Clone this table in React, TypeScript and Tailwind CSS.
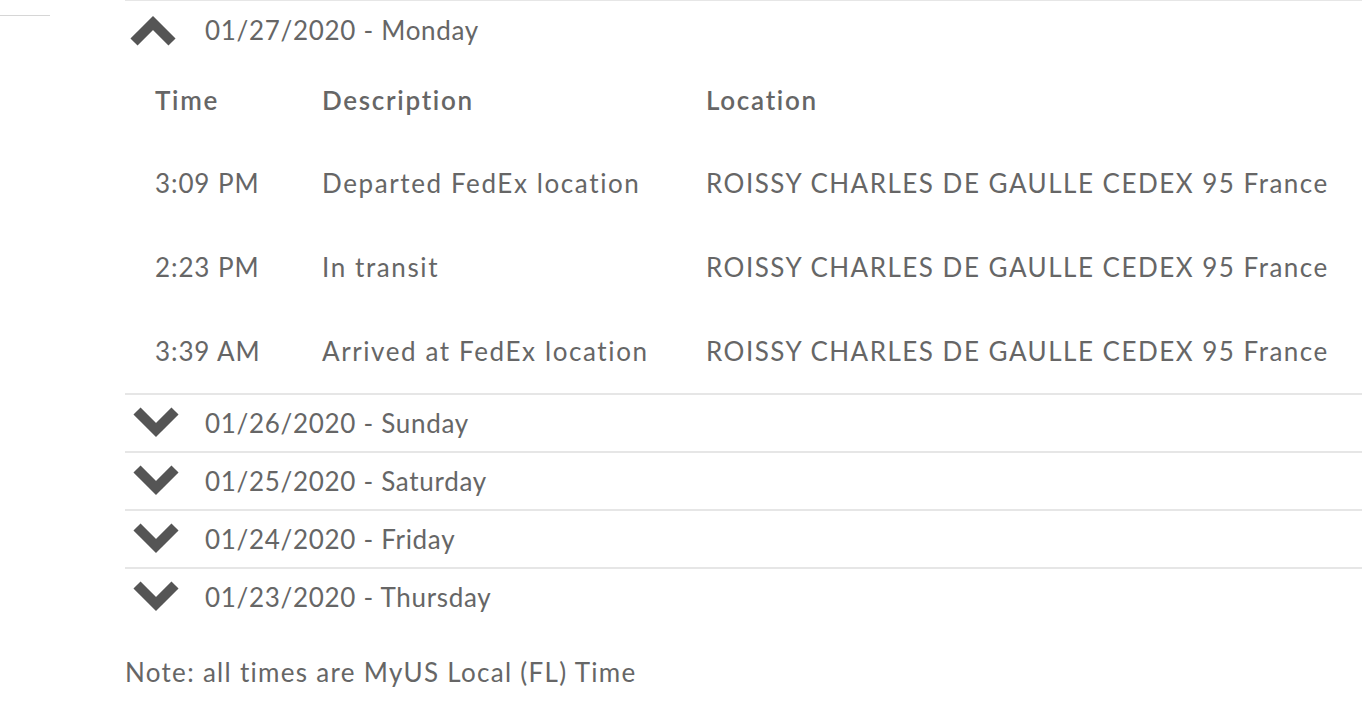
import React from "react";

const font = { fontFamily: "Lato, 'Noto Sans', sans-serif" };

function Chevron({ up }: { up?: boolean }) {
  return (
    <svg width="50" height="34" viewBox="0 0 50 34" className="shrink-0">
      <polyline
        points={up ? "6,29 25,10 44,29" : "6,5 25,24 44,5"}
        fill="none"
        stroke="#555555"
        strokeWidth="10"
        strokeLinejoin="miter"
      />
    </svg>
  );
}

const rows = [
  ["3:09 PM", "Departed FedEx location", "ROISSY CHARLES DE GAULLE CEDEX 95 France"],
  ["2:23 PM", "In transit", "ROISSY CHARLES DE GAULLE CEDEX 95 France"],
  ["3:39 AM", "Arrived at FedEx location", "ROISSY CHARLES DE GAULLE CEDEX 95 France"],
];

const days = ["01/26/2020 - Sunday", "01/25/2020 - Saturday", "01/24/2020 - Friday", "01/23/2020 - Thursday"];

export default function App() {
  return (
    <div className="w-[1362px] h-[710px] bg-white flex overflow-hidden text-[#666666]" style={font}>
      <div className="w-[125px] shrink-0">
        <div className="w-[50px] h-px bg-[#d6d6d6] mt-[15px]" />
      </div>
      <div className="flex-1 flex flex-col">
        <div className="border-t border-[#e6e6e6]">
          <div className="h-[58px] flex items-center gap-[27px] pl-[3px]">
            <Chevron up />
            <span className="text-[26px] tracking-[0.7px]">01/27/2020 - Monday</span>
          </div>
          <div className="grid grid-cols-[167px_384px_1fr] pl-[30px] text-[26px]">
            <div className="h-[82px] flex items-center font-semibold tracking-[1.7px]">Time</div>
            <div className="h-[82px] flex items-center font-semibold tracking-[1.7px]">Description</div>
            <div className="h-[82px] flex items-center font-semibold tracking-[1.7px]">Location</div>
            {rows.map((r, i) => (
              <React.Fragment key={i}>
                <div className="h-[84px] flex items-center tracking-[0.9px]">{r[0]}</div>
                <div className="h-[84px] flex items-center tracking-[1.6px]">{r[1]}</div>
                <div className="h-[84px] flex items-center tracking-[1.5px] whitespace-nowrap">{r[2]}</div>
              </React.Fragment>
            ))}
          </div>
        </div>
        {days.map((d) => (
          <div
            key={d}
            className="border-t-2 border-[#e6e6e6] h-[58px] flex items-center gap-[24px] pl-[6px]"
          >
            <Chevron />
            <span className="text-[26px] tracking-[0.7px]">{d}</span>
          </div>
        ))}
        <div className="mt-[33px] text-[26px] leading-[28px] tracking-[1.3px]">Note: all times are MyUS Local (FL) Time</div>
      </div>
    </div>
  );
}
